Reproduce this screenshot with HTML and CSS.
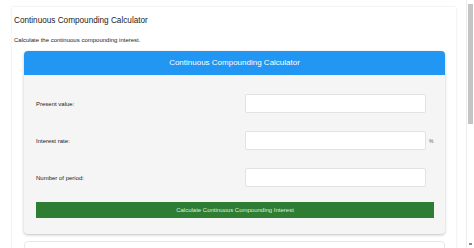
FILE: index.html
```html
<!DOCTYPE html>
<html>
<head>
<meta charset="utf-8">
<link rel="stylesheet" href="styles.css">
</head>
<body>
<div class="page">
  <h1 class="title">Continuous Compounding Calculator</h1>
  <p class="intro">Calculate the continuous compounding interest.</p>
  <div class="card">
    <div class="card-head">Continuous Compounding Calculator</div>
    <div class="card-body">
      <div class="form">
        <label class="lbl">Present value:</label>
        <input class="inp" type="text">
        <span class="unit"></span>
        <label class="lbl">Interest rate:</label>
        <input class="inp" type="text">
        <span class="unit">%</span>
        <label class="lbl">Number of period:</label>
        <input class="inp" type="text">
        <span class="unit"></span>
      </div>
      <button class="btn">Calculate Continuous Compounding Interest</button>
    </div>
  </div>
  <div class="card2"></div>
</div>
<div class="scrollbar"><div class="thumb"></div><div class="arrow"></div></div>
</body>
</html>
```

FILE: styles.css
```css
html { overflow: hidden; }
body {
  margin: 0;
  background: #fff;
  font-family: "Liberation Sans", Arial, sans-serif;
  color: #222;
}
.page {
  margin: 7px 0 0 12px;
  width: 444px;
  box-sizing: border-box;
  padding: 8px 11px 0 2px;
  box-shadow: 0 0 2px rgba(0,0,0,0.12);
  min-height: 300px;
}
.title {
  margin: 0;
  font-size: 8.2px;
  font-weight: normal;
  line-height: 10px;
  padding-top: 1px;
}
.intro {
  margin: 0;
  padding-top: 10px;
  font-size: 6px;
  line-height: 8px;
  color: #222;
}
.card {
  margin: 7px 0 0 10px;
  border-radius: 4px;
  box-shadow: 0 1px 3px rgba(0,0,0,0.25);
  background: #f5f5f5;
}
.card-head {
  height: 24px;
  line-height: 24px;
  background: #2196f3;
  color: #fff;
  text-align: center;
  font-size: 8px;
  border-radius: 4px 4px 0 0;
}
.card-body {
  padding: 19px 11px 16px 12px;
}
.form {
  display: grid;
  grid-template-columns: 1fr 181px 8px;
  row-gap: 18px;
  align-items: center;
}
.lbl {
  font-size: 6px;
  color: #1a1a1a;
}
.inp {
  height: 19px;
  box-sizing: border-box;
  border: 1px solid #e2e2e2;
  border-radius: 2px;
  background: #fff;
  margin: 0;
  padding: 0;
}
.unit {
  font-size: 5px;
  color: #666;
  padding-left: 3px;
}
.btn {
  display: block;
  width: 100%;
  margin-top: 15px;
  height: 16px;
  border: 0;
  padding: 0;
  background: #2e7d32;
  color: #dcefdc;
  font-family: "Liberation Sans", Arial, sans-serif;
  font-size: 6px;
}
.card2 {
  margin: 7px 0 0 10px;
  height: 40px;
  border: 1px solid #e8e8e8;
  border-radius: 4px;
  background: #fff;
}
.scrollbar {
  position: fixed;
  top: 0;
  right: 0;
  width: 7px;
  height: 248px;
  background: #fff;
  border-left: 1px solid #ececec;
}
.thumb {
  position: absolute;
  top: 4px;
  left: 1px;
  width: 5px;
  height: 120px;
  background: #c4c4c4;
}
.arrow {
  position: absolute;
  bottom: 3px;
  left: 2px;
  width: 3px;
  height: 2px;
  background: #888;
}
```
